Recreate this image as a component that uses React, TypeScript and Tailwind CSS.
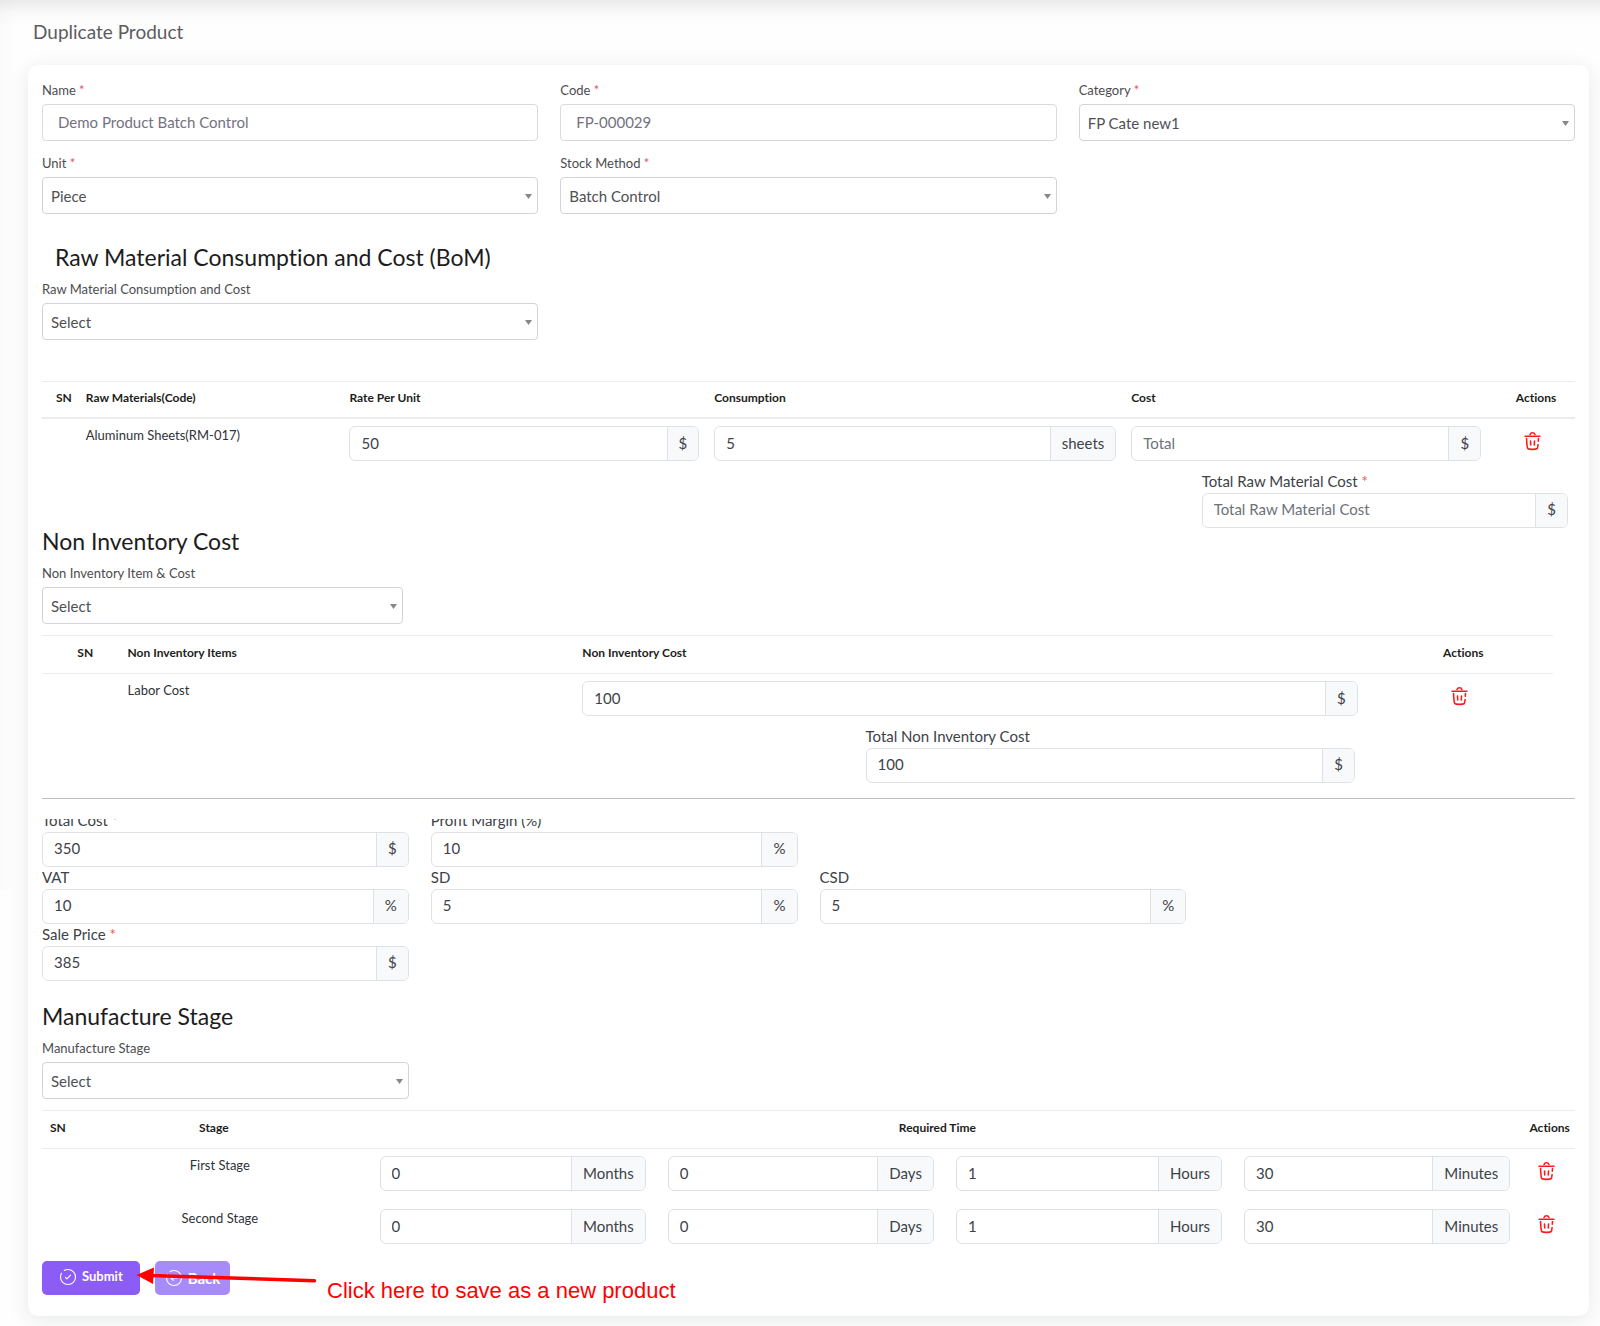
import React, { useId } from "react";
import type { ReactNode } from "react";

function Star() {
  return <span className="text-[#ea5455]"> *</span>;
}

type FieldProps = { label: string; required?: boolean; value: string };

function FieldLabel({ id, label, required }: { id: string; label: string; required?: boolean }) {
  return (
    <label htmlFor={id} className="mb-1 block text-[13px] leading-5 text-[#4c4c50]">
      {label}
      {required && <Star />}
    </label>
  );
}

function TextField({ label, required, value }: FieldProps) {
  const id = useId();
  return (
    <div>
      <FieldLabel id={id} label={label} required={required} />
      <input
        id={id}
        defaultValue={value}
        className="block h-[37px] w-full rounded-[4px] border border-[#d9d9df] bg-white px-[15px] pb-0.5 text-[15px] text-[#74727f] outline-none"
      />
    </div>
  );
}

function SelectField({ label, required, value }: FieldProps) {
  const id = useId();
  return (
    <div>
      <FieldLabel id={id} label={label} required={required} />
      <div className="relative">
        <select
          id={id}
          defaultValue={value}
          className="block h-[37px] w-full appearance-none rounded-[4px] border border-[#d3d3db] bg-white pt-px pr-6 pl-2 text-[15px] text-[#505054] outline-none"
        >
          <option value={value}>{value}</option>
        </select>
        <svg
          viewBox="0 0 7 5"
          className="pointer-events-none absolute top-[17px] right-1.5 h-[5px] w-[7px] text-[#888]"
          aria-hidden="true"
        >
          <path d="M0 0h7L3.500 5z" fill="currentColor" />
        </svg>
      </div>
    </div>
  );
}

type GroupProps = { value?: string; placeholder?: string; unit: string; id?: string; name: string };

function UnitInput({ value, placeholder, unit, id, name }: GroupProps) {
  return (
    <div className="flex h-[35px] overflow-hidden rounded-[6px] border border-[#dee2e6] bg-white text-[15px] text-[#3d4248]">
      <input
        id={id}
        aria-label={id ? undefined : name}
        defaultValue={value}
        placeholder={placeholder}
        className="w-0 min-w-0 flex-1 px-[11px] pb-0.5 outline-none placeholder:text-[#6c7278]"
      />
      <span className="flex items-center border-l border-[#dee2e6] bg-[#f8f9fb] px-[11px] pb-0.5">{unit}</span>
    </div>
  );
}

function LabeledUnitInput({
  label,
  required,
  value,
  placeholder,
  unit,
}: {
  label: string;
  required?: boolean;
  value?: string;
  placeholder?: string;
  unit: string;
}) {
  const id = useId();
  return (
    <div>
      <label htmlFor={id} className="block pb-0.5 text-[15px] leading-5 text-[#3d4248]">
        {label}
        {required && <Star />}
      </label>
      <UnitInput id={id} name={label} value={value} placeholder={placeholder} unit={unit} />
    </div>
  );
}

function TrashButton({ name }: { name: string }) {
  return (
    <button type="button" aria-label={`Delete ${name}`} className="mt-[5px] inline-block align-top text-[#ff1a1a]">
      <svg
        viewBox="0 0 24 24"
        className="size-[21px]"
        fill="none"
        stroke="currentColor"
        strokeWidth="1.8"
        strokeLinecap="round"
        aria-hidden="true"
      >
        <path d="M20.500 6h-17" />
        <path d="M9.170 4a3 3 0 0 1 5.660 0" />
        <path d="M18.830 8.500l-.2 3.200M18.370 15.400c-.18 2.650-.26 3.980-1.130 4.790-.86.810-2.190.810-4.850.810h-.78c-2.660 0-3.990 0-4.850-.810-.87-.81-.95-2.140-1.130-4.790l-.46-6.900" />
        <path d="M9.700 11.500l.3 4.500M14.300 11.500l-.3 4.500" />
      </svg>
    </button>
  );
}

function CircleIcon({ children }: { children: ReactNode }) {
  return (
    <svg
      viewBox="0 0 24 24"
      className="size-[18px]"
      fill="none"
      stroke="currentColor"
      strokeWidth="1.5"
      strokeLinecap="round"
      strokeLinejoin="round"
      aria-hidden="true"
    >
      <path d="M7 3.340A9.950 9.950 0 0 1 12 2c5.520 0 10 4.480 10 10s-4.480 10-10 10S2 17.520 2 12c0-1.820.49-3.530 1.340-5" />
      {children}
    </svg>
  );
}

function Th({ children, className = "" }: { children?: ReactNode; className?: string }) {
  return (
    <th className={`border-t border-[#ececee] pt-0 pb-[3px] text-[12px] font-bold text-[#1d1d20] ${className}`}>
      {children}
    </th>
  );
}

const heading = "mb-[10px] text-[23px] leading-6 text-[#1c1c20]";
const table = "w-full table-fixed border-separate border-spacing-0 text-[13px] leading-[18px] text-[#2f3237]";

const stages = ["First Stage", "Second Stage"];
const durations = [
  { value: "0", unit: "Months" },
  { value: "0", unit: "Days" },
  { value: "1", unit: "Hours" },
  { value: "30", unit: "Minutes" },
];

export default function App() {
  return (
    <main className="min-h-screen bg-[#fefefe] bg-[linear-gradient(180deg,rgba(0,0,0,0.075),rgba(0,0,0,0.02)_50%,rgba(0,0,0,0)),linear-gradient(90deg,rgba(0,0,0,0.015),rgba(0,0,0,0))] bg-[size:100%_26px,16px_890px] bg-no-repeat pr-[11px] pb-[10px] pl-7 font-['Lato','Liberation_Sans',sans-serif] [font-variant-ligatures:none]">
      <h1 className="pt-5 pb-[21px] pl-[5px] text-[19px] leading-6 text-[#5c5c60]">Duplicate Product</h1>

      <form
        className="rounded-[10px] bg-white px-[14px] pt-[15px] pb-[21px] shadow-[0_4px_20px_rgba(34,41,47,0.1)]"
        onSubmit={(e) => e.preventDefault()}
      >
        <section className="grid grid-cols-3 gap-x-[22px] gap-y-3">
          <TextField label="Name" required value="Demo Product Batch Control" />
          <TextField label="Code" required value="FP-000029" />
          <SelectField label="Category" required value="FP Cate new1" />
          <SelectField label="Unit" required value="Piece" />
          <SelectField label="Stock Method" required value="Batch Control" />
        </section>

        <section className="mt-[31px]">
          <h2 className={`${heading} pl-[13px]`}>Raw Material Consumption and Cost (BoM)</h2>
          <div className="mb-[41px] grid grid-cols-3 gap-x-[22px]">
            <SelectField label="Raw Material Consumption and Cost" value="Select" />
          </div>
          <table className={table}>
            <thead>
              <tr className="h-[38px]">
                <Th className="w-[2.4%] border-b-2 pr-[7px] pl-0 text-right">SN</Th>
                <Th className="w-[17.2%] border-b-2 pl-[7px] text-left">Raw Materials(Code)</Th>
                <Th className="w-[23.8%] border-b-2 pl-[7px] text-left">Rate Per Unit</Th>
                <Th className="w-[27.2%] border-b-2 pl-[7px] text-left">Consumption</Th>
                <Th className="w-[23.8%] border-b-2 pl-[7px] text-left">Cost</Th>
                <Th className="w-[5.6%] border-b-2 pr-[7px] pl-[15px] text-center">Actions</Th>
              </tr>
            </thead>
            <tbody>
              <tr className="align-top">
                <td />
                <td className="py-[7px] pl-[7px]">Aluminum Sheets(RM-017)</td>
                <td className="py-[7px] pr-2 pl-[7px]">
                  <UnitInput name="Rate per unit" value="50" unit="$" />
                </td>
                <td className="py-[7px] pr-2 pl-[7px]">
                  <UnitInput name="Consumption" value="5" unit="sheets" />
                </td>
                <td className="py-[7px] pr-2 pl-[7px]">
                  <UnitInput name="Cost" placeholder="Total" unit="$" />
                </td>
                <td className="py-[7px] text-center">
                  <TrashButton name="Aluminum Sheets" />
                </td>
              </tr>
            </tbody>
          </table>
          <div className="mt-[3px] mr-[7px] ml-auto w-[23.9%]">
            <LabeledUnitInput label="Total Raw Material Cost" required placeholder="Total Raw Material Cost" unit="$" />
          </div>
        </section>

        <section>
          <h2 className={`${heading} pt-px`}>Non Inventory Cost</h2>
          <div className="mr-[22px]">
            <div className="mb-[11px] grid grid-cols-4 gap-x-[22px]">
              <SelectField label="Non Inventory Item &amp; Cost" value="Select" />
            </div>
            <table className={table}>
              <thead>
                <tr className="h-[39px]">
                  <Th className="w-[5.2%] border-b pr-[7px] pl-[15px] text-center">SN</Th>
                  <Th className="w-[30.1%] border-b pl-[7px] text-left">Non Inventory Items</Th>
                  <Th className="w-[52.3%] border-b pl-[7px] text-left">Non Inventory Cost</Th>
                  <Th className="w-[12.4%] border-b pr-[7px] pl-[15px] text-center">Actions</Th>
                </tr>
              </thead>
              <tbody>
                <tr className="align-top">
                  <td />
                  <td className="py-[7px] pl-[7px]">Labor Cost</td>
                  <td className="py-[7px] pr-2 pl-[7px]">
                    <UnitInput name="Non inventory cost" value="100" unit="$" />
                  </td>
                  <td className="py-[7px] text-center">
                    <TrashButton name="Labor Cost" />
                  </td>
                </tr>
              </tbody>
            </table>
            <div className="mt-[3px] mr-[13.1%] ml-auto w-[32.4%]">
              <LabeledUnitInput label="Total Non Inventory Cost" value="100" unit="$" />
            </div>
          </div>
        </section>

        <hr className="mt-[15px] mb-5 border-[#bcbcbf]" />

        <section className="overflow-hidden">
          <div className="-mt-[9px] grid grid-cols-4 gap-x-[22px]">
            <LabeledUnitInput label="Total Cost" required value="350" unit="$" />
            <LabeledUnitInput label="Profit Margin (%)" value="10" unit="%" />
            <div className="col-start-1">
              <LabeledUnitInput label="VAT" value="10" unit="%" />
            </div>
            <LabeledUnitInput label="SD" value="5" unit="%" />
            <LabeledUnitInput label="CSD" value="5" unit="%" />
            <div className="col-start-1">
              <LabeledUnitInput label="Sale Price" required value="385" unit="$" />
            </div>
          </div>
        </section>

        <section className="mt-[23px]">
          <h2 className={heading}>Manufacture Stage</h2>
          <div className="mb-[11px] grid grid-cols-4 gap-x-[22px]">
            <SelectField label="Manufacture Stage" value="Select" />
          </div>
          <table className={table}>
            <thead>
              <tr className="h-[39px]">
                <Th className="w-[1.9%] border-b pr-0 pl-2 text-left">SN</Th>
                <Th className="w-[19.4%] border-b pr-3 text-center">Stage</Th>
                <Th className="w-[75%] border-b pr-3 text-center">Required Time</Th>
                <Th className="w-[3.7%] border-b pr-0 pl-1.5 text-center">Actions</Th>
              </tr>
            </thead>
            <tbody>
              {stages.map((stage) => (
                <tr key={stage} className="align-top">
                  <td />
                  <td className="pt-[7px] text-center">{stage}</td>
                  <td className="pt-[7px] pr-2 pb-[11px] pl-[11px]">
                    <div className="grid grid-cols-4 gap-x-[22px]">
                      {durations.map((d) => (
                        <UnitInput key={d.unit} name={`${stage} ${d.unit}`} value={d.value} unit={d.unit} />
                      ))}
                    </div>
                  </td>
                  <td className="pt-[7px] text-center">
                    <TrashButton name={stage} />
                  </td>
                </tr>
              ))}
            </tbody>
          </table>
        </section>

        <div className="relative mt-[6px] flex gap-[15px] font-bold text-white">
          <button
            type="submit"
            className="flex h-[34px] items-center gap-[5px] rounded-[5px] bg-[#8b5cf6] px-[17px] pb-0.5 text-[13px]"
          >
            <CircleIcon>
              <path d="M8.500 12.500l2 2 5-5" />
            </CircleIcon>
            Submit
          </button>
          <button
            type="button"
            className="flex h-[34px] items-center gap-[5px] rounded-[5px] bg-[#a78bfa] px-[10px] text-[15px]"
          >
            <CircleIcon>
              <path d="M16 12H8m3-3-3 3 3 3" />
            </CircleIcon>
            Back
          </button>
          <svg
            viewBox="0 0 182 20"
            className="pointer-events-none absolute top-[6px] left-[94px] h-5 w-[182px]"
            aria-hidden="true"
          >
            <path d="M14 8.500L178.500 13.700" stroke="#ff0000" strokeWidth="3.500" strokeLinecap="round" />
            <path d="M0.500 8L18 0.500L17 17z" fill="#ff0000" />
          </svg>
          <p className="pointer-events-none absolute top-[17px] left-[285px] font-['Liberation_Sans',Arial,sans-serif] text-[22px] leading-[26px] font-normal whitespace-nowrap text-[#ff0000]">
            Click here to save as a new product
          </p>
        </div>
      </form>
    </main>
  );
}
